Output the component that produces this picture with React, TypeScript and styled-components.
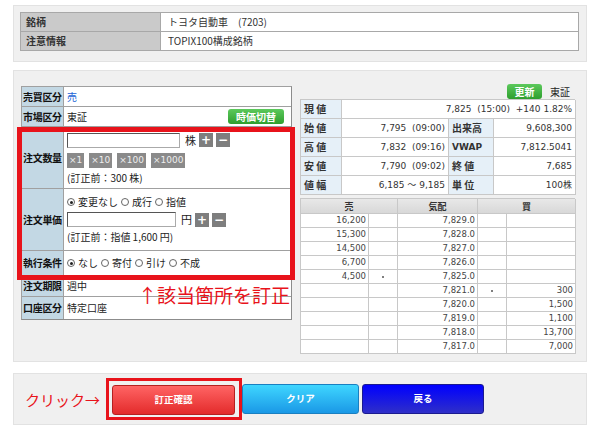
import React from 'react';
import styled, { createGlobalStyle } from 'styled-components';

const GlobalStyle = createGlobalStyle`
  html, body { margin: 0; padding: 0; background: #fff; }
  body {
    font-family: "Noto Sans CJK JP", "DejaVu Sans", sans-serif;
    color: #222;
    font-size: 10px;
  }
  * { box-sizing: border-box; }
`;

const Page = styled.div`
  width: 587px;
  padding: 5px 0 0 13px;
`;

const Panel = styled.div<{ $top?: number; $h: number }>`
  width: 574px;
  height: ${p => p.$h}px;
  margin-top: ${p => p.$top ?? 0}px;
  background: #f0f0f0;
  border: 1px solid #e2e2e2;
`;

/* ---- top info ---- */
const InfoPanel = styled(Panel)`
  padding: 6px 0 0 6px;
`;

const InfoGrid = styled.div`
  width: 559px;
  display: grid;
  grid-template-columns: 140px 1fr;
  border: 1px solid #a8a8a8;
  background: #fff;
`;

const InfoLabel = styled.div<{ $last?: boolean }>`
  height: ${p => (p.$last ? 18 : 19)}px;
  background: #cacaca;
  border-right: 1px solid #a8a8a8;
  border-bottom: ${p => (p.$last ? 'none' : '1px solid #a8a8a8')};
  padding-left: 5px;
  font-weight: bold;
  color: #333;
  display: flex;
  align-items: center;
  line-height: 1;
`;

const InfoValue = styled.div<{ $last?: boolean }>`
  height: ${p => (p.$last ? 18 : 19)}px;
  border-bottom: ${p => (p.$last ? 'none' : '1px solid #a8a8a8')};
  padding-left: 7px;
  display: flex;
  align-items: center;
  color: #333;
  line-height: 1;
`;

/* ---- main order panel ---- */
const MainPanel = styled(Panel)`
  display: flex;
  align-items: flex-start;
  padding: 13px 0 0 7px;
`;

const LeftWrap = styled.div`
  position: relative;
  width: 271px;
  margin-top: 2px;
`;

const OrderGrid = styled.div`
  display: grid;
  grid-template-columns: 42px 1fr;
  border: 1px solid #a0a0a0;
  border-right-color: #8c8c8c;
  border-bottom-color: #8c8c8c;
  background: #fff;
`;

const OLabel = styled.div<{ $h: number; $last?: boolean }>`
  height: ${p => p.$h}px;
  background: #c3d8e4;
  border-right: 1px solid #a0a0a0;
  border-bottom: ${p => (p.$last ? 'none' : '1px solid #a0a0a0')};
  font-weight: bold;
  color: #111;
  display: flex;
  align-items: center;
  padding-left: 1px;
  letter-spacing: -0.3px;
  line-height: 1;
  white-space: nowrap;
`;

const OValue = styled.div<{ $h: number; $last?: boolean }>`
  height: ${p => p.$h}px;
  border-bottom: ${p => (p.$last ? 'none' : '1px solid #a0a0a0')};
  display: flex;
  flex-direction: column;
  justify-content: center;
  gap: 5px;
  padding: 0 3px;
  line-height: 1;
`;

const Line = styled.div<{ $gap?: number }>`
  display: flex;
  align-items: center;
  gap: ${p => p.$gap ?? 0}px;
  white-space: nowrap;
`;

const SellText = styled.span`
  color: #1a62d6;
`;

const GreenBtn = styled.span<{ $w: number }>`
  width: ${p => p.$w}px;
  height: 15px;
  border-radius: 3px;
  background: linear-gradient(#5cc95c, #2e9f2e);
  color: #fff;
  font-weight: bold;
  font-size: 10px;
  display: inline-flex;
  align-items: center;
  justify-content: center;
  line-height: 1;
`;

const MarketLine = styled.div`
  display: flex;
  align-items: center;
  justify-content: space-between;
  padding-right: 4px;
`;

const TextInput = styled.input<{ $w: number }>`
  width: ${p => p.$w}px;
  height: 15px;
  border: 1px solid #555;
  border-right-color: #aaa;
  border-bottom-color: #aaa;
  padding: 0;
  margin: 0;
  background: #fff;
`;

const Unit = styled.span`
  margin: 0 3px 0 5px;
  font-size: 11px;
`;

const SqBtn = styled.span`
  width: 14px;
  height: 14px;
  margin-right: 3px;
  background: #7e7e7e;
  color: #fff;
  font-size: 12px;
  font-weight: bold;
  display: inline-flex;
  align-items: center;
  justify-content: center;
  line-height: 1;
  font-family: "DejaVu Sans", sans-serif;
`;

const MulBtn = styled.span`
  height: 15px;
  padding: 0 2px;
  background: #8a8a8a;
  color: #eee;
  font-size: 9px;
  display: inline-flex;
  align-items: center;
  line-height: 1;
  font-family: "DejaVu Sans", sans-serif;
`;

const Radio = styled.span<{ $checked?: boolean }>`
  width: 8px;
  height: 8px;
  border-radius: 50%;
  border: 1px solid #666;
  background: #fff;
  display: inline-block;
  position: relative;
  margin-right: 3px;
  &::after {
    content: '';
    display: ${p => (p.$checked ? 'block' : 'none')};
    position: absolute;
    left: 1.5px;
    top: 1.5px;
    width: 3px;
    height: 3px;
    border-radius: 50%;
    background: #222;
  }
`;

const RadioItem = styled.span`
  display: inline-flex;
  align-items: center;
  margin-right: 3px;
`;

const Highlight = styled.div`
  position: absolute;
  left: -4px;
  top: 41px;
  width: 278px;
  height: 153px;
  border: 5px solid #e8131b;
  pointer-events: none;
`;

const Note = styled.div`
  position: absolute;
  left: 117px;
  top: 199px;
  color: #e8131b;
  font-size: 19px;
  line-height: 1;
  white-space: nowrap;
`;

/* ---- right side ---- */
const RightCol = styled.div`
  width: 275px;
  margin-left: 8px;
`;

const RightHead = styled.div`
  height: 15px;
  display: flex;
  justify-content: flex-end;
  align-items: center;
  gap: 8px;
  padding-right: 5px;
  line-height: 1;
`;

const QuoteGrid = styled.div`
  display: grid;
  grid-template-columns: 41px 107px 45px 82px;
  border-top: 1px solid #c8c8c8;
  border-left: 1px solid #c8c8c8;
  background: #fff;
  font-family: "DejaVu Sans", "Noto Sans CJK JP", sans-serif;
  font-size: 9px;
`;

const QCell = styled.div<{ $label?: boolean; $latin?: boolean; $span?: number }>`
  height: 19px;
  grid-column: span ${p => p.$span ?? 1};
  border-right: 1px solid #c8c8c8;
  border-bottom: 1px solid #c8c8c8;
  background: ${p => (p.$label ? '#e6f0f8' : '#fff')};
  font-weight: ${p => (p.$label ? 'bold' : 'normal')};
  font-family: ${p => (p.$label && !p.$latin ? '"Noto Sans CJK JP", sans-serif' : 'inherit')};
  font-size: ${p => (p.$label && !p.$latin ? '10px' : '9px')};
  color: #333;
  display: flex;
  align-items: center;
  justify-content: ${p => (p.$label ? 'flex-start' : 'flex-end')};
  padding: 0 3px;
  white-space: pre;
  line-height: 1;
`;

const BookGrid = styled.div`
  margin-top: 3px;
  display: grid;
  grid-template-columns: 68px 29px 80px 29px 69px;
  border-top: 1px solid #c8c8c8;
  border-left: 1px solid #c8c8c8;
  background: #fff;
  font-family: "DejaVu Sans", sans-serif;
  font-size: 8.5px;
  color: #444;
`;

const BookHead = styled.div<{ $span?: number }>`
  height: 15px;
  grid-column: span ${p => p.$span ?? 1};
  background: linear-gradient(#e8e8e8, #d8d8d8);
  border-right: 1px solid #c8c8c8;
  border-bottom: 1px solid #c8c8c8;
  font-family: "Noto Sans CJK JP", sans-serif;
  font-weight: bold;
  font-size: 9px;
  color: #333;
  display: flex;
  align-items: center;
  justify-content: center;
  line-height: 1;
`;

const BookCell = styled.div<{ $center?: boolean }>`
  height: 14px;
  border-right: 1px solid #c8c8c8;
  border-bottom: 1px solid #c8c8c8;
  display: flex;
  align-items: center;
  justify-content: ${p => (p.$center ? 'center' : 'flex-end')};
  padding: 0 2px;
  line-height: 1;
`;

const Dot = styled.span`
  width: 2px;
  height: 2px;
  border-radius: 50%;
  background: #555;
`;

/* ---- bottom bar ---- */
const ActionPanel = styled(Panel)`
  display: flex;
  align-items: center;
  padding-left: 11px;
`;

const ClickText = styled.span`
  color: #e8131b;
  font-size: 15px;
  line-height: 1;
  width: 81px;
  white-space: nowrap;
`;

const FocusBox = styled.div`
  border: 3px solid #e8131b;
  padding: 4px 4px 2px 3px;
  margin-top: -1px;
`;

const ActionBtn = styled.div<{ $w: number; $from: string; $to: string; $edge: string; $gap?: number }>`
  width: ${p => p.$w}px;
  height: 30px;
  margin-left: ${p => p.$gap ?? 0}px;
  border-radius: 3px;
  background: linear-gradient(${p => p.$from}, ${p => p.$to});
  border: 1px solid ${p => p.$edge};
  color: #fff;
  font-weight: bold;
  font-size: 9.5px;
  display: flex;
  align-items: center;
  justify-content: center;
  line-height: 1;
`;

const book: [string, boolean, string, boolean, string][] = [
  ['16,200', false, '7,829.0', false, ''],
  ['15,300', false, '7,828.0', false, ''],
  ['14,500', false, '7,827.0', false, ''],
  ['6,700', false, '7,826.0', false, ''],
  ['4,500', true, '7,825.0', false, ''],
  ['', false, '7,821.0', true, '300'],
  ['', false, '7,820.0', false, '1,500'],
  ['', false, '7,819.0', false, '1,100'],
  ['', false, '7,818.0', false, '13,700'],
  ['', false, '7,817.0', false, '7,000'],
];

export default function App() {
  return (
    <>
      <GlobalStyle />
      <Page>
        <InfoPanel $h={57}>
          <InfoGrid>
            <InfoLabel>銘柄</InfoLabel>
            <InfoValue>トヨタ自動車　(7203)</InfoValue>
            <InfoLabel $last>注意情報</InfoLabel>
            <InfoValue $last>TOPIX100構成銘柄</InfoValue>
          </InfoGrid>
        </InfoPanel>

        <MainPanel $top={8} $h={292}>
          <LeftWrap>
            <OrderGrid>
              <OLabel $h={20}>売買区分</OLabel>
              <OValue $h={20}>
                <SellText>売</SellText>
              </OValue>

              <OLabel $h={20}>市場区分</OLabel>
              <OValue $h={20}>
                <MarketLine>
                  <span>東証</span>
                  <GreenBtn $w={56}>時価切替</GreenBtn>
                </MarketLine>
              </OValue>

              <OLabel $h={62}>注文数量</OLabel>
              <OValue $h={62}>
                <Line>
                  <TextInput $w={113} readOnly />
                  <Unit>株</Unit>
                  <SqBtn>+</SqBtn>
                  <SqBtn>−</SqBtn>
                </Line>
                <Line $gap={5}>
                  <MulBtn>×1</MulBtn>
                  <MulBtn>×10</MulBtn>
                  <MulBtn>×100</MulBtn>
                  <MulBtn>×1000</MulBtn>
                </Line>
                <Line>(訂正前：300 株)</Line>
              </OValue>

              <OLabel $h={62}>注文単価</OLabel>
              <OValue $h={62}>
                <Line>
                  <RadioItem><Radio $checked />変更なし</RadioItem>
                  <RadioItem><Radio />成行</RadioItem>
                  <RadioItem><Radio />指値</RadioItem>
                </Line>
                <Line>
                  <TextInput $w={109} readOnly />
                  <Unit>円</Unit>
                  <SqBtn>+</SqBtn>
                  <SqBtn>−</SqBtn>
                </Line>
                <Line>(訂正前：指値 1,600 円)</Line>
              </OValue>

              <OLabel $h={25}>執行条件</OLabel>
              <OValue $h={25}>
                <Line>
                  <RadioItem><Radio $checked />なし</RadioItem>
                  <RadioItem><Radio />寄付</RadioItem>
                  <RadioItem><Radio />引け</RadioItem>
                  <RadioItem><Radio />不成</RadioItem>
                </Line>
              </OValue>

              <OLabel $h={21}>注文期限</OLabel>
              <OValue $h={21}>週中</OValue>

              <OLabel $h={22} $last>口座区分</OLabel>
              <OValue $h={22} $last>特定口座</OValue>
            </OrderGrid>
            <Highlight />
            <Note>↑該当箇所を訂正</Note>
          </LeftWrap>

          <RightCol>
            <RightHead>
              <GreenBtn $w={35}>更新</GreenBtn>
              <span>東証</span>
            </RightHead>
            <QuoteGrid>
              <QCell $label>現 値</QCell>
              <QCell $span={3}>7,825  (15:00)  +140 1.82%</QCell>
              <QCell $label>始 値</QCell>
              <QCell>7,795  (09:00)</QCell>
              <QCell $label>出来高</QCell>
              <QCell>9,608,300</QCell>
              <QCell $label>高 値</QCell>
              <QCell>7,832  (09:16)</QCell>
              <QCell $label $latin>VWAP</QCell>
              <QCell>7,812.5041</QCell>
              <QCell $label>安 値</QCell>
              <QCell>7,790  (09:02)</QCell>
              <QCell $label>終 値</QCell>
              <QCell>7,685</QCell>
              <QCell $label>値 幅</QCell>
              <QCell>6,185 ～ 9,185</QCell>
              <QCell $label>単 位</QCell>
              <QCell>100株</QCell>
            </QuoteGrid>
            <BookGrid>
              <BookHead $span={2}>売</BookHead>
              <BookHead>気配</BookHead>
              <BookHead $span={2}>買</BookHead>
              {book.map(([sell, sm, price, bm, buy], i) => (
                <React.Fragment key={i}>
                  <BookCell>{sell}</BookCell>
                  <BookCell $center>{sm && <Dot />}</BookCell>
                  <BookCell>{price}</BookCell>
                  <BookCell $center>{bm && <Dot />}</BookCell>
                  <BookCell>{buy}</BookCell>
                </React.Fragment>
              ))}
            </BookGrid>
          </RightCol>
        </MainPanel>

        <ActionPanel $top={11} $h={52}>
          <ClickText>クリック→</ClickText>
          <FocusBox>
            <ActionBtn $w={123} $from="#ff6464" $to="#e32b2b" $edge="#b52020">訂正確認</ActionBtn>
          </FocusBox>
          <ActionBtn $w={117} $from="#3fd6ff" $to="#1a98e6" $edge="#1a7fc0">クリア</ActionBtn>
          <ActionBtn $w={122} $gap={3} $from="#0000ff" $to="#2f2fc8" $edge="#1a1a90">戻る</ActionBtn>
        </ActionPanel>
      </Page>
    </>
  );
}
